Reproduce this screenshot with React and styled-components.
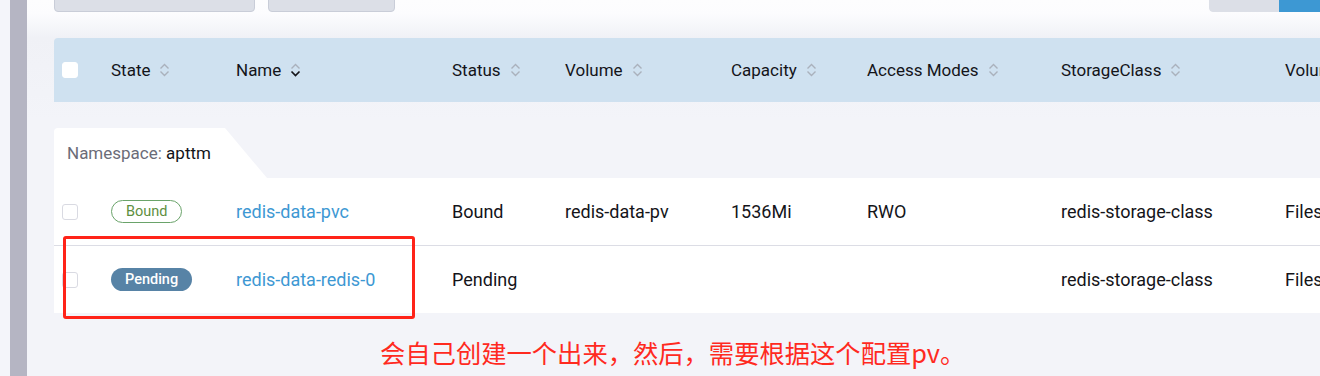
import React from 'react';
import styled, { createGlobalStyle } from 'styled-components';

const GlobalStyle = createGlobalStyle`
  html, body {
    margin: 0;
    height: 376px;
    overflow: hidden;
    background: #f4f5fa;
  }
  body {
    font-family: Roboto, "Noto Sans", sans-serif;
    color: #141419;
  }
`;

const columns = '57px 125px 216px 113px 166px 136px 194px 224px 200px';

const headers = [
  { label: 'State' },
  { label: 'Name', active: true },
  { label: 'Status' },
  { label: 'Volume' },
  { label: 'Capacity' },
  { label: 'Access Modes' },
  { label: 'StorageClass' },
  { label: 'VolumeMode', noSort: true },
];

const rows = [
  {
    state: 'Bound',
    name: 'redis-data-pvc',
    status: 'Bound',
    volume: 'redis-data-pv',
    capacity: '1536Mi',
    access: 'RWO',
    storage: 'redis-storage-class',
    mode: 'Filesystem',
  },
  {
    state: 'Pending',
    name: 'redis-data-redis-0',
    status: 'Pending',
    volume: '',
    capacity: '',
    access: '',
    storage: 'redis-storage-class',
    mode: 'Filesystem',
  },
];

function SortIcon({ active }) {
  return (
    <SortSvg viewBox="0 0 11 16" width="11" height="16">
      <path d="M1.5 6.5 L5.5 2.5 L9.5 6.5" fill="none" stroke="#aab1bc" strokeWidth="1.4" />
      <path
        d="M1.5 9.5 L5.5 13.5 L9.5 9.5"
        fill="none"
        stroke={active ? '#141419' : '#aab1bc'}
        strokeWidth={active ? 1.7 : 1.4}
      />
    </SortSvg>
  );
}

export default function App() {
  return (
    <Page>
      <GlobalStyle />
      <Edge />
      <Rail />
      <Main>
        <Toolbar>
          <Group>
            <ToolButton width={201} />
            <ToolButton width={127} />
          </Group>
          <Group>
            <ToolButton width={70} flat />
            <PrimaryButton />
          </Group>
        </Toolbar>

        <Table>
          <HeadRow>
            <Cell>
              <Check head />
            </Cell>
            {headers.map(h => (
              <HeadCell key={h.label}>
                {h.label}
                {!h.noSort && <SortIcon active={h.active} />}
              </HeadCell>
            ))}
          </HeadRow>

          <GroupTab>
            <Muted>Namespace:</Muted>&nbsp;apttm
          </GroupTab>

          {rows.map(r => (
            <BodyRow key={r.name}>
              <Cell>
                <Check />
              </Cell>
              <Cell>
                <Badge kind={r.state}>{r.state}</Badge>
              </Cell>
              <Cell>
                <Link>{r.name}</Link>
              </Cell>
              <Cell>{r.status}</Cell>
              <Cell>{r.volume}</Cell>
              <Cell>{r.capacity}</Cell>
              <Cell>{r.access}</Cell>
              <Cell>{r.storage}</Cell>
              <Cell>{r.mode}</Cell>
            </BodyRow>
          ))}
        </Table>

        <Note>会自己创建一个出来，然后，需要根据这个配置pv。</Note>
        <Marker />
      </Main>
    </Page>
  );
}

const Page = styled.div`
  display: flex;
  height: 376px;
  width: 1320px;
  overflow: hidden;
`;

const Edge = styled.div`
  width: 10px;
  flex-shrink: 0;
  background: #f4f5fa;
`;

const Rail = styled.div`
  width: 17px;
  flex-shrink: 0;
  background: #b5b5c3;
`;

const Main = styled.div`
  position: relative;
  flex: 1;
  min-width: 0;
  overflow: hidden;
  padding-left: 27px;
  background: linear-gradient(#fdfdfe 0, #fcfcfe 14px, #f0f1f6 38px, #f3f4f9 120px, #f3f4f9 100%);
`;

const Toolbar = styled.div`
  display: flex;
  justify-content: space-between;
  margin-top: -28px;
  margin-right: -40px;
`;

const Group = styled.div`
  display: flex;
  gap: 13px;
`;

const ToolButton = styled.div`
  width: ${p => p.width}px;
  height: 40px;
  box-sizing: border-box;
  background: #dcdfe7;
  border: 1px solid #c9cdd8;
  border-radius: 4px;
  ${p => p.flat && 'border-color: #dcdfe7; margin-right: -13px; border-radius: 4px 0 0 4px;'}
`;

const PrimaryButton = styled.div`
  width: 81px;
  height: 40px;
  background: #3d98d3;
`;

const Table = styled.div`
  margin-top: 26px;
  width: 1431px;
`;

const HeadRow = styled.div`
  display: grid;
  grid-template-columns: ${columns};
  height: 64px;
  align-items: center;
  background: #cfe1f0;
  border-radius: 4px 0 0 0;
  font-size: 17px;
  padding-bottom: 1px;
  box-sizing: border-box;
`;

const Cell = styled.div`
  display: flex;
  align-items: center;
  white-space: nowrap;
  &:first-child {
    padding-left: 8px;
  }
`;

const HeadCell = styled(Cell)`
  gap: 9px;
`;

const SortSvg = styled.svg`
  display: block;
`;

const Check = styled.span`
  display: block;
  width: 16px;
  height: 16px;
  box-sizing: border-box;
  border-radius: 3px;
  background: #fff;
  border: 1px solid ${p => (p.head ? '#fff' : '#d9dae2')};
`;

const GroupTab = styled.div`
  margin-top: 26px;
  width: 213px;
  height: 50px;
  box-sizing: border-box;
  padding-left: 13px;
  display: flex;
  align-items: center;
  background: #fff;
  border-radius: 4px 0 0 0;
  clip-path: polygon(0 0, 171px 0, 100% 100%, 0 100%);
  font-size: 17px;
  color: #141419;
`;

const Muted = styled.span`
  color: #6b6c78;
`;

const BodyRow = styled.div`
  display: grid;
  grid-template-columns: ${columns};
  height: 67px;
  align-items: center;
  background: #fff;
  font-size: 18px;
  & + & {
    border-top: 1px solid #dcdde5;
  }
`;

const Badge = styled.span`
  display: inline-flex;
  align-items: center;
  height: 23px;
  box-sizing: border-box;
  padding: 0 14px;
  border-radius: 12px;
  font-size: 14.5px;
  ${p =>
    p.kind === 'Bound'
      ? 'border: 1px solid #6aa36a; color: #5e8f3f; background: #fff;'
      : 'background: #5783a6; color: #fff; font-weight: 500;'}
`;

const Link = styled.span`
  color: #3d98d3;
`;

const Note = styled.div`
  margin-top: 24px;
  margin-left: 326px;
  font-family: "Noto Sans CJK SC", "Noto Sans", sans-serif;
  font-size: 25.3px;
  line-height: 30px;
  color: #ff2a1f;
  white-space: nowrap;
`;

const Marker = styled.div`
  position: absolute;
  left: 36px;
  top: 236px;
  width: 352px;
  height: 83px;
  box-sizing: border-box;
  border: 3px solid #ff2318;
  border-radius: 3px;
`;
